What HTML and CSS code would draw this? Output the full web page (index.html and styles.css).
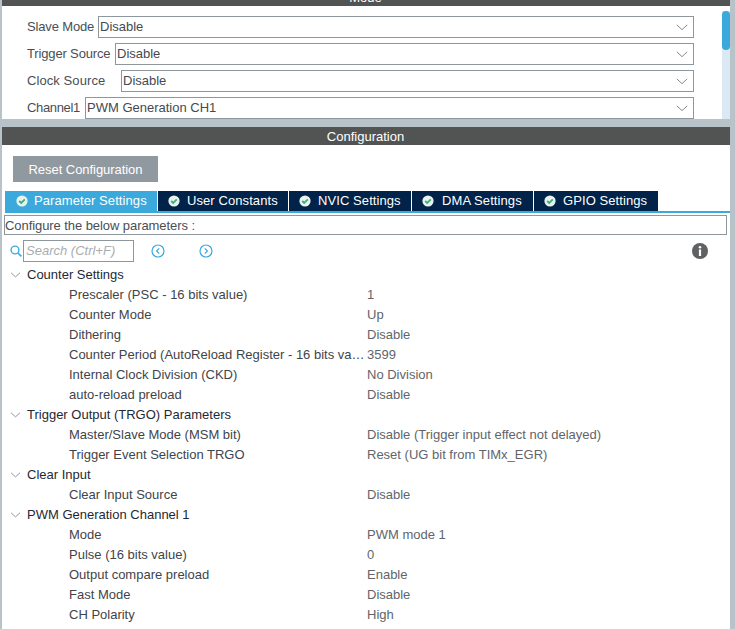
FILE: index.html
```html
<!DOCTYPE html>
<html lang="en">
<head>
<meta charset="utf-8">
<title>Configuration</title>
<link rel="stylesheet" href="styles.css">
</head>
<body>
<svg class="defs" width="0" height="0" aria-hidden="true">
  <symbol id="chev" viewBox="0 0 14 8"><path d="M1 1l6 5.5L13 1" fill="none" stroke="currentColor" stroke-width="1.1"/></symbol>
  <symbol id="ok" viewBox="0 0 12 12"><circle cx="6" cy="6" r="5.6" fill="#e9f3ee"/><path d="M3.2 6l2 2 3.6-3.6" fill="none" stroke="#3fae7c" stroke-width="1.8"/></symbol>
</svg>
<div class="app">
  <section class="mode">
    <div class="bar bar-mode"><span>Mode</span></div>
    <div class="mode-body">
      <div class="mode-rows">
        <div class="mode-row"><label class="lbl lbl-slave">Slave Mode</label><div class="select">Disable<svg class="chev"><use href="#chev"/></svg></div></div>
        <div class="mode-row"><label class="lbl lbl-trigger">Trigger Source</label><div class="select">Disable<svg class="chev"><use href="#chev"/></svg></div></div>
        <div class="mode-row"><label class="lbl lbl-clock">Clock Source</label><div class="select">Disable<svg class="chev"><use href="#chev"/></svg></div></div>
        <div class="mode-row"><label class="lbl lbl-channel">Channel1</label><div class="select">PWM Generation CH1<svg class="chev"><use href="#chev"/></svg></div></div>
      </div>
      <div class="scrollbar"><div class="thumb"></div></div>
    </div>
  </section>
  <section class="config">
    <div class="bar bar-config"><span>Configuration</span></div>
    <div class="config-body">
      <button class="reset">Reset Configuration</button>
      <div class="tabs">
        <div class="tab tab-active tab-param"><svg class="ok"><use href="#ok"/></svg>Parameter Settings</div>
        <div class="tab tab-user"><svg class="ok"><use href="#ok"/></svg>User Constants</div>
        <div class="tab tab-nvic"><svg class="ok"><use href="#ok"/></svg>NVIC Settings</div>
        <div class="tab tab-dma"><svg class="ok"><use href="#ok"/></svg>DMA Settings</div>
        <div class="tab tab-gpio"><svg class="ok"><use href="#ok"/></svg>GPIO Settings</div>
      </div>
      <div class="hint">Configure the below parameters :</div>
      <div class="tools">
        <svg class="search-ic" viewBox="0 0 12 12"><circle cx="5" cy="5" r="3.9" fill="none" stroke="#3ba9dc" stroke-width="1.4"/><path d="M8 8l3.4 3.4" stroke="#3ba9dc" stroke-width="1.6"/></svg>
        <div class="search">Search (Ctrl+F)</div>
        <svg class="nav nav-prev" viewBox="0 0 14 14"><circle cx="7" cy="7" r="6" fill="none" stroke="#3ba9dc" stroke-width="1.2"/><path d="M8.2 4.4L5.6 7l2.6 2.6" fill="none" stroke="#3ba9dc" stroke-width="1.2"/></svg>
        <svg class="nav nav-next" viewBox="0 0 14 14"><circle cx="7" cy="7" r="6" fill="none" stroke="#3ba9dc" stroke-width="1.2"/><path d="M5.8 4.4L8.4 7l-2.6 2.6" fill="none" stroke="#3ba9dc" stroke-width="1.2"/></svg>
        <svg class="info" viewBox="0 0 16 16"><circle cx="8" cy="8" r="8" fill="#5f6163"/><circle cx="8" cy="4.2" r="1.3" fill="#fff"/><rect x="6.9" y="6.5" width="2.2" height="6.5" fill="#fff"/></svg>
      </div>
      <div class="tree">
        <div class="group"><svg class="chev-g"><use href="#chev"/></svg>Counter Settings</div>
        <div class="row"><span class="name">Prescaler (PSC - 16 bits value)</span><span class="val">1</span></div>
        <div class="row"><span class="name">Counter Mode</span><span class="val">Up</span></div>
        <div class="row"><span class="name">Dithering</span><span class="val">Disable</span></div>
        <div class="row"><span class="name">Counter Period (AutoReload Register - 16 bits value)</span><span class="val">3599</span></div>
        <div class="row"><span class="name">Internal Clock Division (CKD)</span><span class="val">No Division</span></div>
        <div class="row"><span class="name">auto-reload preload</span><span class="val">Disable</span></div>
        <div class="group"><svg class="chev-g"><use href="#chev"/></svg>Trigger Output (TRGO) Parameters</div>
        <div class="row"><span class="name">Master/Slave Mode (MSM bit)</span><span class="val">Disable (Trigger input effect not delayed)</span></div>
        <div class="row"><span class="name">Trigger Event Selection TRGO</span><span class="val">Reset (UG bit from TIMx_EGR)</span></div>
        <div class="group"><svg class="chev-g"><use href="#chev"/></svg>Clear Input</div>
        <div class="row"><span class="name">Clear Input Source</span><span class="val">Disable</span></div>
        <div class="group"><svg class="chev-g"><use href="#chev"/></svg>PWM Generation Channel 1</div>
        <div class="row"><span class="name">Mode</span><span class="val">PWM mode 1</span></div>
        <div class="row"><span class="name">Pulse (16 bits value)</span><span class="val">0</span></div>
        <div class="row"><span class="name">Output compare preload</span><span class="val">Enable</span></div>
        <div class="row"><span class="name">Fast Mode</span><span class="val">Disable</span></div>
        <div class="row"><span class="name">CH Polarity</span><span class="val">High</span></div>
      </div>
    </div>
  </section>
</div>
</body>
</html>
```

FILE: styles.css
```css
* { box-sizing: border-box; }
html, body { margin: 0; padding: 0; }
body { width: 735px; height: 629px; overflow: hidden; font: 13px/20px "Liberation Sans", Arial, sans-serif; color: #3b3f45; }
.defs { position: absolute; }
.app { height: 629px; background: #b7c2c9; padding: 0 5px 0 2px; display: flex; flex-direction: column; overflow: hidden; }
.bar { background: #525454; color: #fff; display: flex; justify-content: center; align-items: flex-end; overflow: hidden; padding-right: 1px; flex: none; }
.bar span { line-height: 20px; display: block; height: 18px; flex: none; }
.bar-mode { height: 6px; }
.bar-config { height: 18px; }
.mode { flex: none; }
.mode-body { display: flex; height: 113px; background: #fff; }
.mode-rows { flex: 1; padding: 10px 28px 0 25px; display: flex; flex-direction: column; gap: 5.5px; }
.mode-row { display: flex; height: 21.5px; align-items: center; }
.lbl { flex: none; color: #4a4e54; letter-spacing: -.15px; }
.lbl-slave { width: 71px; }
.lbl-trigger { width: 88px; }
.lbl-clock { width: 94px; letter-spacing: .08px; }
.lbl-channel { width: 58px; letter-spacing: -.35px; }
.select { flex: 1; height: 100%; border: 1px solid #8f979e; padding-left: 1px; color: #454a50; line-height: 20px; position: relative; }
.chev { position: absolute; right: 5px; top: 7px; width: 12px; height: 7px; color: #7d8388; }
.scrollbar { width: 8px; background: #dbe9f4; margin: 5px 0 0; flex: none; }
.thumb { width: 8px; height: 39px; background: #3ba9dc; border-radius: 4px; }
.config { flex: 1; margin-top: 8px; min-height: 0; display: flex; flex-direction: column; }
.config-body { flex: 1; background: #fff; min-height: 0; }
.reset { display: block; margin: 11px 0 0 11px; width: 145px; height: 26px; border: 0; background: #9199a0; color: #fff; font: 13px "Liberation Sans", Arial, sans-serif; padding: 0; letter-spacing: -.05px; }
.tabs { display: flex; margin: 9px 0 0 3px; gap: 1px; height: 22px; border-bottom: 2px solid #3ba9dc; }
.tab { background: #012249; color: #fff; height: 20px; line-height: 20px; display: flex; align-items: center; padding-left: 10px; flex: none; white-space: nowrap; letter-spacing: .08px; }
.tab-active { background: #3ba9dc; }
.tab-param { width: 152px; padding-left: 11px; }
.tab-user { width: 130px; }
.tab-nvic { width: 122px; }
.tab-dma { width: 121px; }
.tab-gpio { width: 124px; }
.ok { width: 12px; height: 12px; margin-right: 6px; flex: none; }
.tab-user .ok, .tab-nvic .ok, .tab-gpio .ok { margin-right: 7px; }
.tab-dma .ok { margin-right: 8px; }
.hint { margin: 2px 3px 0 2px; height: 20px; border: 1px solid #8f979e; line-height: 20px; color: #4a4e54; white-space: nowrap; letter-spacing: -.07px; }
.tools { height: 25px; margin-top: 3px; display: flex; align-items: center; }
.search-ic { width: 12px; height: 12px; margin-left: 8px; flex: none; }
.search { width: 111px; height: 22px; margin-left: 1px; border: 1px solid #8f979e; font-style: italic; color: #a9adb1; line-height: 20px; padding-left: 2px; white-space: nowrap; }
.nav { width: 14px; height: 14px; flex: none; }
.nav-prev { margin-left: 17px; }
.nav-next { margin-left: 34px; }
.info { width: 16px; height: 16px; margin-left: auto; margin-right: 22px; flex: none; }
.tree { margin-top: 2px; }
.group { height: 20px; line-height: 20px; display: flex; align-items: center; padding-left: 25px; position: relative; color: #1f2933; }
.chev-g { position: absolute; left: 8px; top: 7px; width: 11px; height: 6px; color: #7d8388; }
.row { display: flex; height: 20px; padding-left: 67px; }
.name { width: 298px; flex: none; padding-right: 2px; white-space: nowrap; overflow: hidden; text-overflow: ellipsis; color: #3f444a; }
.val { color: #5f656b; white-space: nowrap; }
```
